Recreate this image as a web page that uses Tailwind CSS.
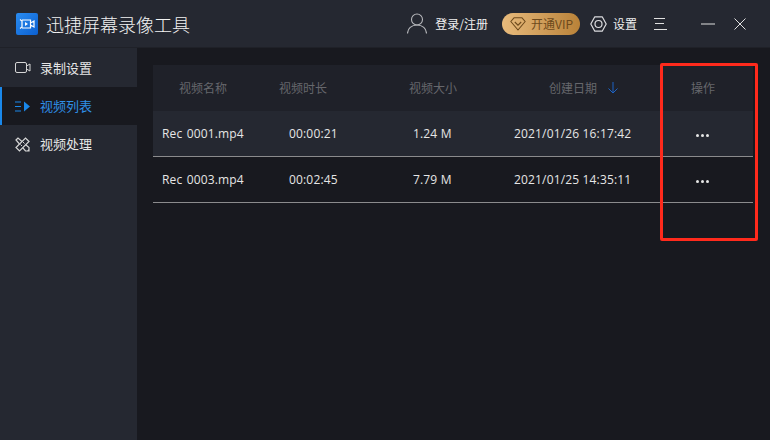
<!DOCTYPE html>
<html lang="zh-CN">
<head>
    <meta charset="UTF-8">
    <title>迅捷屏幕录像工具</title>
    <script src="https://cdn.jsdelivr.net/npm/@tailwindcss/browser@4"></script>
</head>
<body class="w-[770px] h-[440px] overflow-hidden relative bg-[#18191f] text-[#e6e6e6] font-['Open_Sans','Noto_Sans_CJK_SC',sans-serif] text-xs">
    <!-- title bar -->
    <header class="h-[48px] flex items-center bg-[#252831] border-b border-[#1f2128]">
        <div class="ml-[16px] w-[22px] h-[22px] rounded-[2px] bg-gradient-to-br from-[#2a8cf0] to-[#0b5fd0] flex items-center justify-center">
            <svg width="17" height="12" viewBox="0 0 17 12" fill="none" stroke="#fff" stroke-width="1.2">
                <path d="M1 1.5l2 1.5v6l-2 1.5M3 2h8.5v8H3M11.5 5l3.5-2v6l-3.5-2"/>
                <path d="M6 4l3 2-3 2z" fill="#fff" stroke="none"/>
            </svg>
        </div>
        <div class="ml-[8px] text-[18px] leading-none text-[#f2f2f2] font-['Noto_Sans_CJK_SC',sans-serif] font-light">迅捷屏幕录像工具</div>
        <div class="ml-auto flex items-center">
            <svg width="20" height="21" viewBox="0 0 20 21" fill="none" stroke="#b5b6ba" stroke-width="1.1">
                <circle cx="10" cy="6.5" r="5.5"/>
                <path d="M0.5 20.5c0-5 4-8.5 9.500-8.500s9.500 3.500 9.500 8.500"/>
            </svg>
            <span class="ml-[8px] text-[#f0f0f0] font-['Noto_Sans_CJK_SC',sans-serif]">登录/注册</span>
            <div class="ml-[14px] h-[22px] w-[78px] rounded-full bg-gradient-to-r from-[#e8bb7c] to-[#b98238] flex items-center pl-[8px] text-[#6e4a1c] font-['Noto_Sans_CJK_SC',sans-serif] text-[12px]">
                <svg width="16" height="14" viewBox="0 0 16 14" fill="none" stroke="#6e4a1c" stroke-width="1.1">
                    <path d="M4 0.800h8l3.200 3.700-7.200 8.500-7.200-8.500z" stroke-linejoin="round"/>
                    <path d="M4.800 5l3.200 3.200 3.200-3.200"/>
                </svg>
                <span class="ml-[5px]">开通VIP</span>
            </div>
            <svg class="ml-[10px]" width="17" height="16" viewBox="0 0 17 16" fill="none" stroke="#dcdcdf" stroke-width="1.2">
                <path d="M0.800 8l4-7.200h7.400l4 7.200-4 7.200h-7.400z" stroke-linejoin="round"/>
                <circle cx="8.500" cy="8" r="3.500"/>
            </svg>
            <span class="ml-[6px] text-[#f0f0f0] font-['Noto_Sans_CJK_SC',sans-serif]">设置</span>
            <svg class="ml-[17px]" width="13" height="12" viewBox="0 0 13 12" fill="none" stroke="#e0e0e0" stroke-width="1">
                <path d="M0 0.500h11M1 5.500h9M0 11.500h13"/>
            </svg>
            <svg class="ml-[34px]" width="14" height="2" viewBox="0 0 14 2" fill="none" stroke="#e0e0e0" stroke-width="1">
                <path d="M0 1h14"/>
            </svg>
            <svg class="ml-[19px] mr-[24px]" width="12" height="12" viewBox="0 0 12 12" fill="none" stroke="#e0e0e0" stroke-width="1">
                <path d="M0.500 0.500l11 11M11.500 0.500l-11 11"/>
            </svg>
        </div>
    </header>

    <div class="flex h-[392px]">
        <!-- sidebar -->
        <aside class="w-[137px] bg-[#252831] text-[13px] font-['Noto_Sans_CJK_SC',sans-serif]">
            <div class="h-[39px] flex items-center pl-[15px] text-[#e6e6e6]">
                <svg width="16" height="11" viewBox="0 0 16 11" fill="none" stroke="#d6d6d6" stroke-width="1">
                    <rect x="0.500" y="0.500" width="11" height="10" rx="1.500"/>
                    <path d="M11.500 4l3.500-2v7l-3.500-2"/>
                </svg>
                <span class="ml-[9px]">录制设置</span>
            </div>
            <div class="h-[38px] flex items-center pl-[15px] bg-[#18191f] border-l-2 border-[#1a88ea] text-[#2f8fe6]">
                <svg class="-ml-[2px]" width="16" height="11" viewBox="0 0 16 11" fill="none" stroke="#1a88ea" stroke-width="1">
                    <path d="M0 1h6M0 5.500h6M0 10h6"/>
                    <path d="M9 0.500l6 5-6 5z" fill="#1a88ea" stroke="none"/>
                </svg>
                <span class="ml-[9px]">视频列表</span>
            </div>
            <div class="h-[38px] flex items-center pl-[15px] text-[#e6e6e6]">
                <svg width="15" height="15" viewBox="0 0 15 15" fill="none" stroke="#d6d6d6" stroke-width="1.200">
                    <path d="M1 3l2-2 11 9.500v3.500h-3.500z"/>
                    <path d="M14 4.500l-3.500-3.500-9.500 9.500 3.500 3.500z" fill="#252831"/>
                    <path d="M8 5l1.500 1.500M5.500 7.500l1.500 1.500" stroke-width="1"/>
                    <path d="M12 14h2v-2z" fill="#d6d6d6" stroke="none"/>
                </svg>
                <span class="ml-[10px]">视频处理</span>
            </div>
        </aside>

        <!-- video table -->
        <main class="flex-1 pt-[17px] pl-[16px]">
            <div class="w-[600px]">
                <div class="h-[46px] flex items-center bg-[#1f2129] text-[#66676c] font-['Noto_Sans_CJK_SC',sans-serif]">
                    <div class="w-[100px] pl-[26px]">视频名称</div>
                    <div class="w-[130px] pl-[26px]">视频时长</div>
                    <div class="w-[110px] pl-[26px]">视频大小</div>
                    <div class="w-[170px] pl-[56px] flex items-center">
                        创建日期
                        <svg class="ml-[11px]" width="10" height="12" viewBox="0 0 10 12" fill="none" stroke="#1d63c4" stroke-width="1">
                            <path d="M5 0v11M0.500 6.500l4.500 4.500 4.500-4.500"/>
                        </svg>
                    </div>
                    <div class="flex-1 pl-[28px]">操作</div>
                </div>
                <div class="h-[46px] flex items-center bg-[#252831] border-b border-[#8b8b8d] tracking-[0.16px]">
                    <div class="w-[100px] pl-[9px] [word-spacing:1px]">Rec 0001.mp4</div>
                    <div class="w-[130px] pl-[36px]">00:00:21</div>
                    <div class="w-[110px] pl-[30px]">1.24 M</div>
                    <div class="w-[170px] pl-[21px]">2021/01/26 16:17:42</div>
                    <div class="flex-1 flex pl-[33px] gap-[2px] mt-[3px]">
                        <i class="w-[3px] h-[3px] rounded-full bg-[#e6e6e6]"></i><i class="w-[3px] h-[3px] rounded-full bg-[#e6e6e6]"></i><i class="w-[3px] h-[3px] rounded-full bg-[#e6e6e6]"></i>
                    </div>
                </div>
                <div class="h-[46px] flex items-center border-b border-[#8b8b8d] tracking-[0.16px]">
                    <div class="w-[100px] pl-[9px] [word-spacing:1px]">Rec 0003.mp4</div>
                    <div class="w-[130px] pl-[36px]">00:02:45</div>
                    <div class="w-[110px] pl-[30px]">7.79 M</div>
                    <div class="w-[170px] pl-[21px]">2021/01/25 14:35:11</div>
                    <div class="flex-1 flex pl-[33px] gap-[2px] mt-[3px]">
                        <i class="w-[3px] h-[3px] rounded-full bg-[#e6e6e6]"></i><i class="w-[3px] h-[3px] rounded-full bg-[#e6e6e6]"></i><i class="w-[3px] h-[3px] rounded-full bg-[#e6e6e6]"></i>
                    </div>
                </div>
            </div>
        </main>
    </div>

    <!-- red annotation box over the action column -->
    <div class="absolute left-[660px] top-[63px] w-[98px] h-[178px] border-[3px] border-[#ff2a1c] rounded-[2px]"></div>
</body>
</html>
